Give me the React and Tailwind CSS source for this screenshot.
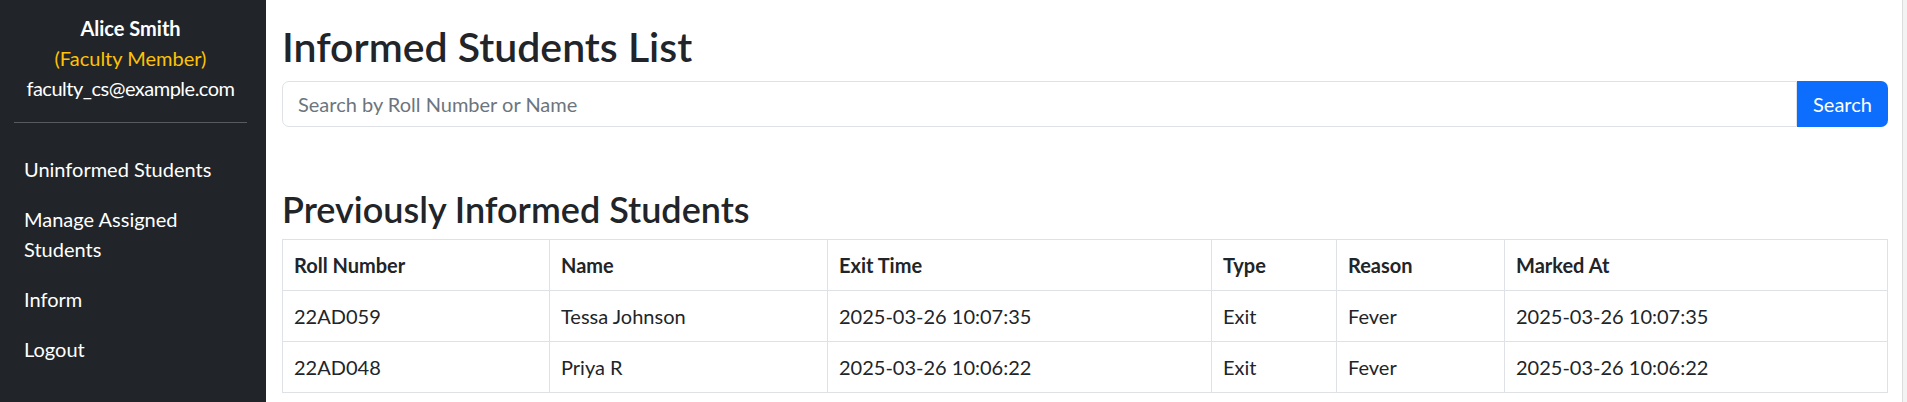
const links = ['Uninformed Students', 'Manage Assigned Students', 'Inform', 'Logout']

const rows = [
  { roll: '22AD059', name: 'Tessa Johnson', exit: '2025-03-26 10:07:35', type: 'Exit', reason: 'Fever', marked: '2025-03-26 10:07:35' },
  { roll: '22AD048', name: 'Priya R', exit: '2025-03-26 10:06:22', type: 'Exit', reason: 'Fever', marked: '2025-03-26 10:06:22' },
]

function Sidebar() {
  return (
    <aside className="w-[266px] shrink-0 bg-[#212529] text-white pt-[13px] pl-[14px] pr-[19px]">
      <div className="text-center text-[20px] leading-[30px]">
        <div className="font-bold">Alice Smith</div>
        <div className="text-[#ffc107]">(Faculty Member)</div>
        <div className="tracking-[-0.5px]">faculty_cs@example.com</div>
      </div>
      <hr className="mt-[19px] border-t border-[#595b5e]" />
      <nav className="mt-[21px] flex flex-col">
        {links.map(l => (
          <a key={l} href="#" className="px-[10px] py-[10px] text-[20px] leading-[30px] text-white">
            {l}
          </a>
        ))}
      </nav>
    </aside>
  )
}

export default function App() {
  return (
    <div className="flex min-h-screen bg-white font-['Lato',sans-serif] text-[#212529]">
      <Sidebar />
      <main className="flex-1 min-w-0 pt-[23px] pl-[16px] pr-[14px]">
        <h1 className="text-[41px] leading-[48px] font-semibold mb-[10px]">Informed Students List</h1>
        <div className="flex h-[46px]">
          <input
            type="text"
            placeholder="Search by Roll Number or Name"
            className="flex-1 min-w-0 border border-[#dee2e6] rounded-l-[7px] px-[15px] text-[20px] outline-none placeholder:text-[#6c757d]"
          />
          <button className="w-[91px] bg-[#0d6efd] text-white text-[20px] rounded-r-[7px]">Search</button>
        </div>

        <h3 className="mt-[61px] mb-[9px] text-[36px] leading-[42px] font-semibold">Previously Informed Students</h3>
        <table className="w-full table-fixed border-collapse text-[20px] leading-[30px]">
          <thead>
            <tr>
              <th className="w-[267px] h-[51px] border border-[#dee2e6] px-[11px] text-left font-bold">Roll Number</th>
              <th className="w-[278px] h-[51px] border border-[#dee2e6] px-[11px] text-left font-bold">Name</th>
              <th className="w-[384px] h-[51px] border border-[#dee2e6] px-[11px] text-left font-bold">Exit Time</th>
              <th className="w-[125px] h-[51px] border border-[#dee2e6] px-[11px] text-left font-bold">Type</th>
              <th className="w-[168px] h-[51px] border border-[#dee2e6] px-[11px] text-left font-bold">Reason</th>
              <th className="h-[51px] border border-[#dee2e6] px-[11px] text-left font-bold">Marked At</th>
            </tr>
          </thead>
          <tbody>
            {rows.map(r => (
              <tr key={r.roll}>
                <td className="h-[51px] border border-[#dee2e6] px-[11px]">{r.roll}</td>
                <td className="h-[51px] border border-[#dee2e6] px-[11px]">{r.name}</td>
                <td className="h-[51px] border border-[#dee2e6] px-[11px]">{r.exit}</td>
                <td className="h-[51px] border border-[#dee2e6] px-[11px]">{r.type}</td>
                <td className="h-[51px] border border-[#dee2e6] px-[11px]">{r.reason}</td>
                <td className="h-[51px] border border-[#dee2e6] px-[11px]">{r.marked}</td>
              </tr>
            ))}
          </tbody>
        </table>
      </main>
      <div className="w-[5px] shrink-0 border-l border-[#dcdcdc] bg-[#f3f3f3]" />
    </div>
  )
}
